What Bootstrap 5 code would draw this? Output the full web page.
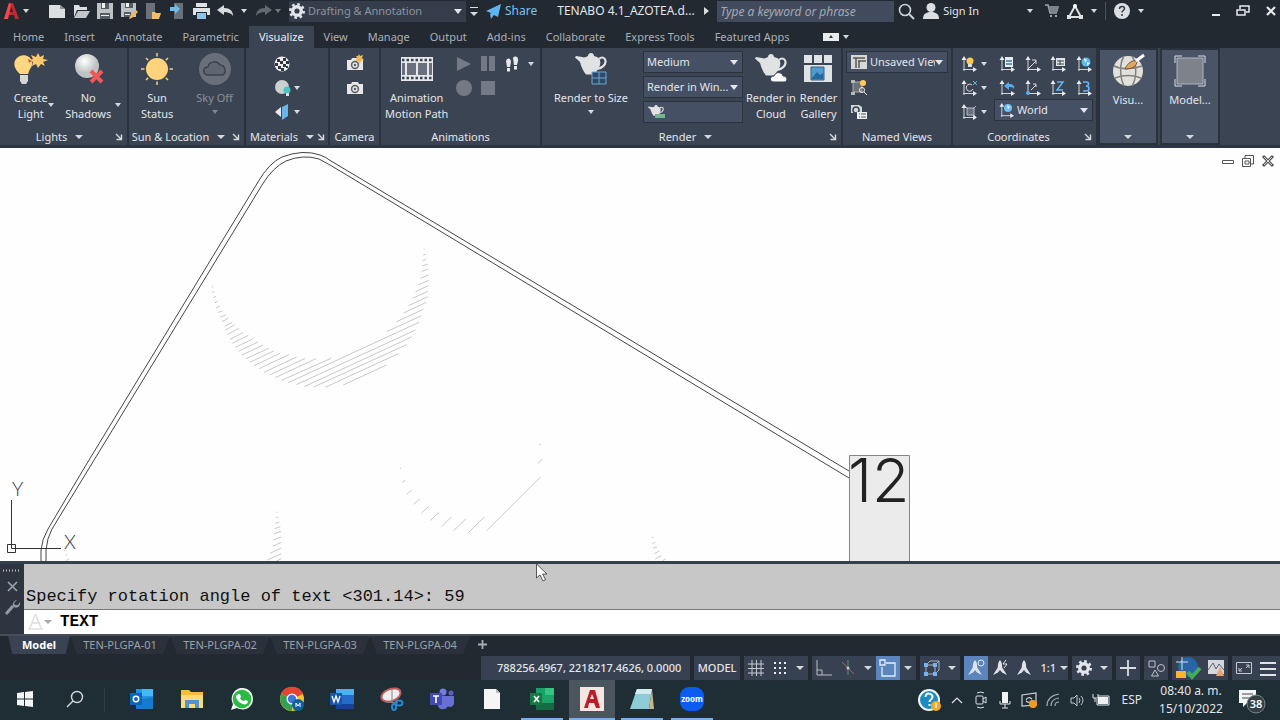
<!DOCTYPE html>
<html lang="en">
<head>
<meta charset="utf-8">
<meta name="viewport" content="width=device-width, initial-scale=1">
<title>TENABO 4.1_AZOTEA</title>
<link href="https://cdn.jsdelivr.net/npm/bootstrap@5.3.0/dist/css/bootstrap.min.css" rel="stylesheet">
<script src="https://cdn.jsdelivr.net/npm/bootstrap@5.3.0/dist/js/bootstrap.bundle.min.js" defer></script>
<style>
:root{--ink:#e3e6ea;--bar:#222931;--rib:#3b4453;--edge:#2a323e;--fld:#465064}
body{font-family:"Noto Sans","Open Sans",sans-serif;font-size:11px;line-height:16px;color:var(--ink);background:var(--bar)}
button{background:none;border:0;padding:0;color:inherit;font:inherit;display:inline-flex;align-items:center;justify-content:center;white-space:nowrap}
svg{display:block;flex:none;overflow:visible}
.shell{min-height:100vh}
.tri{display:block;flex:none;width:0;height:0;border:3px solid transparent;border-top:4px solid #d5d9de;border-bottom:0}
.tri-lg{border-width:4px 4px 0}
.tri-faint{border-top-color:#aaa}
.dim{opacity:.45}
/* title bar */
.titlebar{height:26px;padding-bottom:4px;background:var(--bar)}
.titlebar .tool{width:24px;height:20px}
.pick{appearance:none;border:0;border-radius:0;color:var(--ink);background:var(--fld) url("data:image/svg+xml,%3Csvg xmlns='http://www.w3.org/2000/svg' viewBox='0 0 8 5'%3E%3Cpath d='M0 0h8L4 5z' fill='%23e3e6ea'/%3E%3C/svg%3E") no-repeat right 4px center/8px 5px;padding:0 12px 0 3px;height:20px;font:inherit;outline:1px solid var(--edge)}
.slot .pick,.workspace .pick{outline:0}
.workspace{background:#353d4b;width:177px;height:21px;flex:none}
.workspace .pick{background-color:transparent;color:#8d949e}
.share{color:#7cc4f0;gap:4px;font-size:12px}
.doc-name{font-size:12px}
.find{width:177px;height:21px;background:#414b5d;border:0;color:#d0d4da;font:inherit;font-size:12px;padding:0 3px}
.find::placeholder{color:#a3a9b3;font-style:italic;opacity:1}
.split{border-left:1px solid #4a515b;height:18px}
/* ribbon */
.tabs{height:22px;padding-left:3px}
.tabs a{color:#aab0b8;text-decoration:none;padding:3px 10px;height:22px;white-space:nowrap}
.tabs a.active{background:var(--rib);color:#eef0f2}
.ribbon{background:var(--rib);height:100px;border-bottom:3px solid #2c3541}
.panel{border-right:2px solid var(--edge);flex:none}
.panel h2{font-size:11px;line-height:16px;font-weight:400;margin:0;height:16px}
.corner{width:16px;height:16px}
.big{flex-direction:column;justify-content:flex-start;line-height:16px}
.big svg{margin-bottom:4px}
.drop{align-self:flex-start;padding-top:55px}
.small-btn{width:24px;height:24px}
.slot{height:20px;background:var(--fld);outline:1px solid var(--edge)}
.w-lights{width:129px}.w-sun{width:117px}.w-mat{width:84px}.w-cam{width:51px}.w-anim{width:161px}.w-render{width:301px}.w-views{width:110px}.w-coord{width:145px}
.wide-tile{width:60px;background:#4a5467;border:2px solid var(--edge);height:97px}
.wide-tile + .wide-tile{margin-left:2px}
.picks{width:98px;gap:5px}
/* drawing area */
.stage{background:#fefefe;flex:1 0 413px;position:relative;overflow:hidden}
.stage-art{position:absolute;inset:0}
.wins{position:absolute;right:6px;top:7px;gap:8px}
/* command line */
.cmd{border-top:3px solid #34404b;background:#2e3541}
.cmd-side{width:24px}
.cmd-log{background:#c7c7c7;color:#111;height:46px;border-bottom:1px solid #777;font:17px/25px "Liberation Mono",monospace;white-space:pre;padding-left:2px}
.cmd-in{background:#fff;height:24px}
.cmd-in input{border:0;outline:0;font:bold 16px/24px "Liberation Mono",monospace;color:#000;padding:0}
.pointer{pointer-events:none}
/* sheets, status, taskbar */
.sheets{height:22px;border-top:2px solid #474e59;color:#9aa1ab}
.sheets a{color:inherit;text-decoration:none;text-align:center;width:100px;height:18px;line-height:17px;background:#2a313b;clip-path:polygon(0 0,100% 0,93% 100%,7% 100%)}
.sheets a.first{width:62px;background:#3a4353;color:#fff;font-weight:700}
.status{height:24px;gap:4px;font-weight:500}
.grp{background:#384152;height:24px}
.grp button{width:24px;height:24px}
.grp .nar{width:16px}
.grp .on{background:#5a86bd}
.coords{width:209px}
.task{height:40px;background:#1f2d34;font-size:12px}
.task .app{width:42px;height:40px;margin:0 4px;border-bottom:2px solid transparent}
.task .app.run{border-color:#76b0e4}
.task .app.cur{background:#4a555d;width:46px;margin:0 2px}
.tray button{width:24px;height:40px}
.clock{width:82px;line-height:18px;text-align:center}
</style>
</head>
<body>
<svg width="0" height="0" class="position-absolute" aria-hidden="true">
<defs>
<symbol id="ucs" viewBox="0 0 16 16"><path d="M3 15V3M2 13.500h12" stroke="#cfd4da" fill="none"/><path d="M3 0l2.500 4h-5zM16 13.500l-4-2.500v5z" fill="#e8ebee"/></symbol>
<symbol id="pot" viewBox="0 0 32 22"><path d="M13 3c0-4 6-4 6 0 6 1 7 5 6 9-1 4-4 7-6 9.500h-8C8 18 6 13 5 9L0 4.500 1 3l6 1c2 1 4 0 6-1z" fill="#e0e2e4"/><path d="M24 6c3-3 7-1 6.500 3S26 15 22 16" fill="none" stroke="#e0e2e4" stroke-width="2.200"/></symbol>
<symbol id="gear" viewBox="0 0 16 16"><circle cx="8" cy="8" r="4.300" fill="none" stroke="currentColor" stroke-width="3.400"/><circle cx="8" cy="8" r="6.700" fill="none" stroke="currentColor" stroke-width="2.600" stroke-dasharray="2.600 2.660"/></symbol>
<symbol id="launch" viewBox="0 0 8 8"><path d="M1 1l5 5M6.500 1.500v5h-5" fill="none" stroke="#d5d9de" stroke-width="1.400"/></symbol>
<symbol id="person" viewBox="0 0 16 16"><path d="M8 0c2 2 2.200 5 2.200 7.500L15 15l-5-2.500L8 10l-2 2.500L1 15l4.800-7.500C5.800 5 6 2 8 0z" fill="#dfe3e8"/></symbol>
<symbol id="cam" viewBox="0 0 16 14"><path d="M0 3h4l1-2h6l1 2h4v10H0z" fill="#e8e8e8"/><circle cx="8" cy="8" r="3.400" fill="none" stroke="#555d68" stroke-width="1.500"/><circle cx="8" cy="8" r="1.200" fill="#555d68"/></symbol>
</defs>
</svg>

<div class="shell d-flex flex-column">
<header class="titlebar d-flex align-items-center">
  <button aria-label="Application menu" class="ms-1 gap-1"><svg width="15" height="17" viewBox="0 0 15 17"><path d="M0 16L5 0h4l6 16h-4l-1-4H5l-1 4zM6 9h3L7.500 4z" fill="#c3272f"/><path d="M0 16L5 0l2 1-3 15z" fill="#ee4b50"/></svg><i class="tri"></i></button>
  <nav class="d-flex align-items-center ms-3" aria-label="Quick access">
    <button class="tool" aria-label="New"><svg width="16" height="13" viewBox="0 0 16 13"><path d="M0 0h11l5 4v9H0z" fill="#dcdfe1"/><path d="M11 0v4h5" fill="#8c9299"/></svg></button>
    <button class="tool" aria-label="Open"><svg width="17" height="14" viewBox="0 0 17 14"><path d="M1 13V1h5l1 2h7v3H4z" fill="#dcdfe1"/><path d="M5 7h12l-4 7H1z" fill="#c2c6ca"/></svg></button>
    <button class="tool" aria-label="Save"><svg width="16" height="16"><path d="M0 0h16v16H0z" fill="#bfc2c5"/><path d="M4 0h8v6H4zM3 10h10v6H3z" fill="#555b63"/><path d="M5 0h3v5H5zM4 12h8v1H4z" fill="#eee"/></svg></button>
    <button class="tool" aria-label="Save as"><svg width="16" height="16"><path d="M0 0h15v14H0z" fill="#bfc2c5"/><path d="M4 0h8v5H4zM3 9h7v5H3z" fill="#555b63"/><path d="M5 0h3v4H5zM4 11h5v1H4z" fill="#eee"/><path d="M15 7l2 2-6 6-3 1 1-3z" fill="#f0b75c"/></svg></button>
    <button class="tool" aria-label="Open from mobile"><svg width="16" height="16"><path d="M1 0h9v16H1z" fill="#6b7178"/><path d="M7 9h3l1 1h5l-2 6H7z" fill="#f0c067"/></svg></button>
    <button class="tool" aria-label="Save to mobile"><svg width="14" height="16"><path d="M4 0h9v16H4z" fill="#6b7178"/><path d="M0 4h5V1l5 5-5 5V8H0z" fill="#6dbcf0"/></svg></button>
    <button class="tool" aria-label="Plot"><svg width="17" height="16"><path d="M3 0h11v4H3zM0 5h17v7h-3V9H3v3H0z" fill="#dfe2e4"/><path d="M4 10h9v6H4z" fill="#8cc3ea"/></svg></button>
    <button class="tool" aria-label="Undo"><svg width="17" height="12"><path d="M0 5l7-5v3c6 0 9 3 9 8-2-3-5-4-9-4v3z" fill="#d8dcdf"/></svg></button>
    <button aria-label="Undo list" class="px-1"><i class="tri"></i></button>
    <button class="tool dim" aria-label="Redo"><svg width="17" height="12"><path d="M17 5l-7-5v3c-6 0-9 3-9 8 2-3 5-4 9-4v3z" fill="#b4b8bd"/></svg></button>
    <button aria-label="Redo list" class="dim"><i class="tri"></i></button>
  </nav>
  <div class="workspace d-flex align-items-center ms-2"><svg width="16" height="16"><use href="#gear"/></svg><select class="pick flex-grow-1" aria-label="Workspace"><option>Drafting &amp; Annotation</option></select></div>
  <button class="flex-column gap-1 ms-1" aria-label="Customize"><svg width="8" height="1"><path d="M0 0h8v1H0z" fill="#ddd"/></svg><i class="tri tri-lg"></i></button>
  <button class="share ms-2"><svg width="15" height="15"><path d="M0 7L15 0l-3 13-4-2-3 4-1-5 8-7-7 6z" fill="#5fb6ee"/></svg>Share</button>
  <span class="doc-name ms-3 ps-1 text-nowrap">TENABO 4.1_AZOTEA.d...</span>
  <button class="ms-auto me-2" aria-label="Show search"><svg width="5" height="8"><path d="M0 0l5 4-5 4z" fill="#ddd"/></svg></button>
  <input class="find" placeholder="Type a keyword or phrase" aria-label="Search">
  <button class="ms-1" aria-label="Search"><svg width="17" height="17" fill="none" stroke="#cdd1d5"><circle cx="7" cy="7" r="5.500" stroke-width="1.600"/><path d="M11 11l5 5" stroke-width="2"/></svg></button>
  <button class="ms-2 gap-1"><svg width="16" height="16"><circle cx="8" cy="4.500" r="4.500" fill="#dcdfe2"/><path d="M0 16c0-5 3-7 8-7s8 2 8 7z" fill="#dcdfe2"/></svg>Sign In</button>
  <button class="ms-5 me-2" aria-label="Account"><i class="tri"></i></button>
  <button class="ms-1" aria-label="App store"><svg width="14" height="14"><path d="M0 1h3l2 8h7M4 3h9l-1 4H5" fill="none" stroke="#9da2a9" stroke-width="1.500"/><path d="M4 3h9l-1 5H5z" fill="#7d838b"/><path d="M5 11h2v2H5zM10 11h2v2h-2z" fill="#9da2a9"/></svg></button>
  <button class="ms-2 gap-2" aria-label="Autodesk services"><svg width="16" height="15"><path d="M8 2L2 13h12z" fill="none" stroke="#dfe2e5" stroke-width="2"/><circle cx="8" cy="2" r="2" fill="#fff"/><path d="M0 11h4v4H0zM12 11h4v4h-4z" fill="#dfe2e5"/></svg><i class="tri"></i></button>
  <div class="split mx-2"></div>
  <button class="me-5 gap-2" aria-label="Help"><svg width="16" height="16"><circle cx="8" cy="8" r="8" fill="#dcdfe2"/><path d="M5.500 6c0-3.500 5-3 5-.500 0 2-2.500 2-2.500 4M8 11v2" stroke="#333a44" stroke-width="1.500" fill="none"/></svg><i class="tri"></i></button>
  <div class="d-flex align-items-center gap-3 ms-3 me-1 ps-1">
    <button aria-label="Minimize"><svg width="8" height="14"><path d="M0 10h8v2H0z" fill="#e8eaec"/></svg></button>
    <button aria-label="Restore"><svg width="14" height="12" fill="none" stroke="#e8eaec" stroke-width="1.500"><path d="M1 5h8v5H1zM4 4V1h9v6h-3"/></svg></button>
    <button aria-label="Close"><svg width="10" height="10"><path d="M1 1l8 8M9 1L1 9" stroke="#e8eaec" stroke-width="2.200"/></svg></button>
  </div>
</header>

<nav class="tabs d-flex" aria-label="Ribbon tabs">
  <a href="#">Home</a><a href="#">Insert</a><a href="#">Annotate</a><a href="#">Parametric</a><a href="#" class="active">Visualize</a><a href="#">View</a><a href="#">Manage</a><a href="#">Output</a><a href="#">Add-ins</a><a href="#">Collaborate</a><a href="#">Express Tools</a><a href="#">Featured Apps</a>
  <button class="ms-4 gap-1" aria-label="Minimize ribbon"><svg width="16" height="8"><path d="M0 0h16v8H0z" fill="#e8eaec"/><path d="M6 5l2-3 2 3z" fill="#333"/></svg><i class="tri"></i></button>
</nav>

<main class="ribbon d-flex">
  <section class="panel w-lights d-flex flex-column">
    <div class="d-flex flex-grow-1 justify-content-around ps-2">
      <div class="d-flex"><button class="big pt-1"><svg width="34" height="34"><path d="M6 22C0 17-1 11 2 7s9-5 13-2 4 9 1 12l-2 5z" fill="#ffd681"/><path d="M6 23h8v6l-2 3H8l-2-3z" fill="#d4d6d9"/><path d="M24 1l2 4 4-2-1 4 5 1-5 2 2 4-4-2-3 4-2-4-4 2 1-4-4-2 4-1-2-4 5 2z" fill="#ffca6e"/><path d="M14 7l4 2-3 2z" fill="#d35830"/></svg>Create<br>Light</button><button class="drop" aria-label="Light types"><i class="tri"></i></button></div>
      <div class="d-flex"><button class="big pt-1"><svg width="34" height="34"><defs><radialGradient id="ball" cx=".4" cy=".3"><stop stop-color="#fff"/><stop offset="1" stop-color="#bfc2c3"/></radialGradient></defs><circle cx="16" cy="14" r="12" fill="url(#ball)"/><path d="M20 19l11 11M31 19L20 30" stroke="#ef5a58" stroke-width="4"/></svg>No<br>Shadows</button><button class="drop" aria-label="Shadow types"><i class="tri ms-1"></i></button></div>
    </div>
    <h2 class="d-flex align-items-center"><span class="flex-grow-1 d-flex justify-content-center align-items-center gap-2 ps-2">Lights <i class="tri tri-lg"></i></span><button class="corner" aria-label="Lights settings"><svg width="8" height="8"><use href="#launch"/></svg></button></h2>
  </section>
  <section class="panel w-sun d-flex flex-column">
    <div class="d-flex flex-grow-1 justify-content-around">
      <button class="big pt-1"><svg width="34" height="34"><g stroke="#f0cf85" stroke-width="1.500"><path d="M17 1v32M1 17h32M6 6l22 22M28 6L6 28"/></g><circle cx="17" cy="17" r="12.500" fill="#3b4453"/><circle cx="17" cy="17" r="11" fill="#ffd37c"/></svg>Sun<br>Status</button>
      <button class="big pt-1 dim"><svg width="34" height="34"><circle cx="17" cy="17" r="16" fill="#a2a6ad"/><path d="M9 23c-5-2-4-8 1-8 1-6 9-7 12-2 5 0 7 7 3 10z" fill="#8c9098" stroke="#39414d" stroke-width="1.500"/></svg>Sky Off<i class="tri mt-1"></i></button>
    </div>
    <h2 class="d-flex align-items-center"><span class="flex-grow-1 d-flex justify-content-center align-items-center gap-2 text-nowrap">Sun &amp; Location <i class="tri tri-lg"></i></span><button class="corner" aria-label="Sun settings"><svg width="8" height="8"><use href="#launch"/></svg></button></h2>
  </section>
  <section class="panel w-mat d-flex flex-column">
    <div class="flex-grow-1 d-flex flex-column align-items-start ps-4 pt-1">
      <button class="small-btn" aria-label="Materials browser"><svg width="16" height="16"><circle cx="8" cy="8" r="7.500" fill="#eee"/><path d="M3 3h3v3H3zM9 2h3v3H9zM6 5h3v3H6zM12 5h3v3h-3zM1 7h3v3H1zM9 8h3v3H9zM4 10h3v3H4zM7 12h3v3H7zM12 10h2v2h-2z" fill="#303741"/></svg></button>
      <div class="d-flex"><button class="small-btn" aria-label="Materials on"><svg width="17" height="16"><circle cx="8" cy="7" r="7" fill="#cbd0d0"/><circle cx="13" cy="10" r="3.500" fill="#4bc4c4"/><path d="M12 13h3v3h-3z" fill="#dde"/></svg></button><button aria-label="Material options"><i class="tri"></i></button></div>
      <div class="d-flex"><button class="small-btn" aria-label="Material mapping"><svg width="14" height="16"><path d="M0 8l6-5v10z" fill="#e8eaec"/><path d="M7 3l6-3v12l-6 4z" fill="#69b6ec"/></svg></button><button aria-label="Mapping options"><i class="tri"></i></button></div>
    </div>
    <h2 class="d-flex align-items-center"><span class="flex-grow-1 d-flex justify-content-center align-items-center gap-2 ps-1">Materials <i class="tri tri-lg"></i></span><button class="corner" aria-label="Materials settings"><svg width="8" height="8"><use href="#launch"/></svg></button></h2>
  </section>
  <section class="panel w-cam d-flex flex-column align-items-center">
    <div class="flex-grow-1 d-flex flex-column pt-1">
      <button class="small-btn" aria-label="Create camera"><svg width="16" height="14"><use href="#cam"/><path d="M12-3l1 2 3-1-1 3 2 2-3 1-1 3-2-3-3 0 2-3-1-2 2 0z" fill="#eeb95b"/></svg></button>
      <button class="small-btn" aria-label="Show cameras"><svg width="16" height="14"><use href="#cam"/></svg></button>
    </div>
    <h2>Camera</h2>
  </section>
  <section class="panel w-anim d-flex flex-column">
    <div class="flex-grow-1 d-flex ps-1">
      <button class="big pt-1 me-1"><svg width="34" height="34"><path d="M1 5h32v24H1z" fill="#e6e8ea"/><path d="M2 11h3v12H2zM7 11h9v12H7zM18 11h9v12h-9zM29 11h3v12h-3z" fill="#6a717c"/><path d="M2 8h30M2 26h30" stroke="#3b4453" stroke-width="2.500" stroke-dasharray="2.500 2"/></svg>Animation<br>Motion Path</button>
      <div class="d-flex flex-wrap align-content-start pt-1">
        <button class="small-btn" aria-label="Play"><svg width="16" height="16"><path d="M1 1l14 7-14 7z" fill="#747a85"/></svg></button><button class="small-btn" aria-label="Pause"><svg width="16" height="16"><path d="M1 0h6v15H1zM9 0h6v15H9z" fill="#747a85"/></svg></button><button class="small-btn" aria-label="Walk"><svg width="14" height="16"><path d="M1 5c1-4 5-3 5 1l-1 5H2zM2 12h3v3.500H2zM8 2c2-3 6-1 5 3l-1 4H9zM9 10h3v3.500H9z" fill="#e6e8ea"/></svg></button><button aria-label="Walk options"><i class="tri ms-1"></i></button>
        <button class="small-btn" aria-label="Record"><svg width="16" height="16"><circle cx="8" cy="8" r="8" fill="#747a85"/></svg></button><button class="small-btn" aria-label="Stop"><svg width="16" height="16"><path d="M1 1h14v14H1z" fill="#747a85"/></svg></button>
      </div>
    </div>
    <h2 class="text-center">Animations</h2>
  </section>
  <section class="panel w-render d-flex flex-column">
    <div class="flex-grow-1 d-flex">
      <button class="big pt-1 ms-1 px-2"><svg width="34" height="34"><use href="#pot" x="1" y="1" width="32" height="22"/><path d="M18 20h14v12H18z" fill="#2e4a66" stroke="#6ca6d4"/><path d="M25 20v12M18 26h14" stroke="#6ca6d4"/></svg>Render to Size<i class="tri mt-1"></i></button>
      <div class="picks d-flex flex-column pt-1 ms-2">
        <select class="pick" aria-label="Render preset"><option>Medium</option></select>
        <select class="pick" aria-label="Render target"><option>Render in Win...</option></select>
        <div class="slot d-flex align-items-center ps-1"><svg width="17" height="14"><use href="#pot" width="16" height="11"/><path d="M7 9h10v4H7z" fill="#76b593"/></svg></div>
      </div>
      <button class="big pt-1 ms-1"><svg width="34" height="34"><use href="#pot" x="1" y="2" width="32" height="22"/><path d="M20 30c-5 0-5-6 0-6 2-5 8-4 9 0 5 0 5 6 1 6z" fill="#fafafa" stroke="#3b4453"/></svg>Render in<br>Cloud</button>
      <button class="big pt-1 ms-1"><svg width="34" height="34"><path d="M3 3h8v8H3zM13 3h8v8h-8zM23 3h8v8h-8zM3 13h28v17H3z" fill="#e0e3e5"/><path d="M10 15h13v13H10z" fill="#4e9bd0" stroke="#365f80"/><path d="M11 26l5-6 3 3 3-2v6H11z" fill="#2469a0"/></svg>Render<br>Gallery</button>
    </div>
    <h2 class="d-flex align-items-center"><span class="flex-grow-1 d-flex justify-content-center align-items-center gap-2 ps-1">Render <i class="tri tri-lg"></i></span><button class="corner" aria-label="Render settings"><svg width="8" height="8"><use href="#launch"/></svg></button></h2>
  </section>
  <section class="panel w-views d-flex flex-column">
    <div class="flex-grow-1 d-flex flex-column align-items-start px-1 pt-1">
      <div class="slot d-flex align-items-center w-100 mb-1"><svg class="ms-1" width="16" height="14"><path d="M0 0h16v14H0z" fill="#d8d9d7"/><path d="M2 3h12M5 3v10M7 6h8M8 6v7" stroke="#555" stroke-width="1.500"/></svg><select class="pick flex-grow-1 w-50" aria-label="Named view"><option>Unsaved View</option></select></div>
      <button class="small-btn" aria-label="New view"><svg width="16" height="16"><path d="M2 2h9v10H2z" fill="#6a717b" stroke="#aaa"/><path d="M0 0h4v3H0zM0 12h4v3H0z" fill="#b5b8bc"/><circle cx="12" cy="3" r="3" fill="#ffcd56"/><circle cx="11" cy="10" r="2.500" fill="none" stroke="#eee"/><path d="M13 12l3 3" stroke="#eee"/></svg></button>
      <button class="small-btn" aria-label="View manager"><svg width="16" height="16"><path d="M0 1h8l3 2v6H0z" fill="#d5d8da"/><circle cx="5" cy="6" r="3" fill="none" stroke="#3b4453" stroke-width="1.500"/><path d="M6 8h10v7H6z" fill="#f0f0f0"/><path d="M8 10h1M10 10h5M8 13h1M10 13h5" stroke="#456"/></svg></button>
    </div>
    <h2 class="text-center">Named Views</h2>
  </section>
  <section class="panel w-coord d-flex flex-column">
    <div class="flex-grow-1 d-flex pt-1 ps-1">
      <div class="d-flex flex-column">
        <div class="d-flex"><button class="small-btn" aria-label="UCS icon"><svg width="16" height="16"><use href="#ucs"/><circle cx="9" cy="5" r="3.500" fill="#ffc951"/><path d="M7 8h4v3H7z" fill="#ddd"/></svg></button><button aria-label="UCS icon options"><i class="tri"></i></button></div>
        <div class="d-flex"><button class="small-btn" aria-label="Rotate X"><svg width="16" height="16"><use href="#ucs"/><path d="M11 5a3.500 3.500 0 1 0 1 4" fill="none" stroke="#ddd"/><path d="M12 1l4 4M16 1l-4 4" stroke="#5bb8c8"/></svg></button><button aria-label="Rotate options"><i class="tri"></i></button></div>
        <div class="d-flex"><button class="small-btn" aria-label="UCS view"><svg width="16" height="16"><use href="#ucs"/><path d="M6 4h7v7H6zM4 2l3 3M15 2l-3 3M15 13l-3-3" fill="#687180" stroke="#bbc"/></svg></button><button aria-label="View options"><i class="tri"></i></button></div>
      </div>
      <div class="flex-grow-1 ps-2">
        <div class="d-flex justify-content-between"><button class="small-btn" aria-label="UCS"><svg width="16" height="16"><use href="#ucs"/><path d="M6 1h8v10H6z" fill="#e9ecef"/><path d="M7 5h6M7 8h6" stroke="#347bb0" stroke-width="1.500"/></svg></button><button class="small-btn" aria-label="Z axis vector"><svg width="16" height="16"><use href="#ucs"/><path d="M3 13l8-8M7 4h4v4" stroke="#ddd" fill="none"/></svg></button><button class="small-btn" aria-label="UCS named"><svg width="16" height="16"><use href="#ucs"/><path d="M6 2h9v8H6z" fill="#e2e5e8"/><path d="M7 5h7M7 8h7M10 4v5" stroke="#444"/></svg></button><button class="small-btn" aria-label="UCS world"><svg width="16" height="16"><use href="#ucs"/><circle cx="10" cy="6" r="4.500" fill="#58b7ef"/><path d="M8 2l3 2-2 3zM11 6l3 1-3 3z" fill="#e9f5fc"/></svg></button></div>
        <div class="d-flex justify-content-between"><button class="small-btn" aria-label="UCS previous"><svg width="16" height="16"><use href="#ucs"/><path d="M5 6l5-4v2c4 0 6 2 5 5-1-2-3-2-5-2v3z" fill="#58aaf0"/></svg></button><button class="small-btn" aria-label="Origin"><svg width="16" height="16"><use href="#ucs"/><path d="M6 10l5-5M8 4h3v3" stroke="#ddd" fill="none"/><circle cx="3" cy="13" r="2" fill="#58aaf0"/></svg></button><button class="small-btn" aria-label="Z axis rotate"><svg width="16" height="16"><use href="#ucs"/><path d="M7 2h6l-6 8h6" stroke="#65b4f2" stroke-width="1.500" fill="none"/></svg></button><button class="small-btn" aria-label="3 point"><svg width="16" height="16"><use href="#ucs"/><path d="M7 2h3c4 0 3 4 0 4 4 0 4 5 0 5H7" stroke="#65b4f2" stroke-width="1.600" fill="none"/></svg></button></div>
        <div class="slot d-flex align-items-center me-1"><svg class="ms-1" width="15" height="15"><use href="#ucs"/><circle cx="9" cy="5" r="4" fill="#6dc1f2"/><path d="M8 2l3 2-2 2z" fill="#e9f5fc"/></svg><select class="pick flex-grow-1 w-50" aria-label="Coordinate system"><option>World</option></select></div>
      </div>
    </div>
    <h2 class="d-flex align-items-center"><span class="flex-grow-1 text-center ps-1">Coordinates</span><button class="corner" aria-label="Coordinates settings"><svg width="8" height="8"><use href="#launch"/></svg></button></h2>
  </section>
  <button class="big wide-tile"><svg width="34" height="34" class="mt-1"><circle cx="17" cy="17" r="15" fill="#e2e1dc"/><path d="M3 12c8 4 20 3 28 0M4 24c8-3 18-3 26 0M13 2c-5 8-4 22 0 30M21 2c5 8 5 22 0 30" fill="none" stroke="#82817c" stroke-width="1.500"/><path d="M14 15c3-7 8-9 12-8 0 5-4 8-12 8z" fill="#dca663" stroke="#75552f"/><path d="M25 7l8-6" stroke="#fff" stroke-width="3"/></svg>Visu...<i class="tri tri-lg mt-auto mb-1"></i></button>
  <button class="big wide-tile"><svg width="34" height="34" class="mt-1"><path d="M4 4h26v26H4z" fill="#7d828b" stroke="#adb7c3"/><path d="M2 9V2h7M25 2h7v7M32 25v7h-7M9 32H2v-7" fill="none" stroke="#d9e0e7"/></svg>Model...<i class="tri tri-lg mt-auto mb-1"></i></button>
</main>

<section class="stage" aria-label="Drawing">
  <svg class="stage-art w-100 h-100" viewBox="0 148 1280 413" preserveAspectRatio="xMinYMin slice" fill="none">
    <g stroke="#454545">
      <path d="M41 562V550Q42 539 48 529L83 470 258 182Q269 163 282 157 303 149 320 155 326 157 331 161L440 226 849 471"/>
      <path d="M46 562V550Q47 538 52 529L88 470 262 185Q273 167 286 161 303 154 319 159L330 165 440 231 849 478"/>
    </g>
    <path d="M849.500 562V455.500h60V562" fill="#ebebeb" stroke="#858585"/>
    <text x="848" y="502" font-family="Inter" font-weight="300" font-size="61" fill="#222">12</text>
    <g stroke="#c8c8c8" stroke-width="3">
      <path transform="translate(200 150) scale(.3333)" d="M35 412l5-3M37 428l6-3M40 443l8-4M44 459l9-5M48 474l12-6M54 488l13-6M60 502l18-8M66 515l20-11M74 529l23-12M76 541l28-17M82 554l34-19M90 568l40-21M97 580l48-24M106 592l54-26M116 604l58-28M126 615l64-30M138 626l68-31M150 637l71-34M162 647l78-37M177 656l90-42M192 667l98-46M209 675l107-50M226 683l122-57M245 691l148-66M265 698L657 517M289 704L647 540M313 710L635 561M341 711L620 584M376 712L595 611M430 705L560 645M560 545l105-48M590 515l80-37M611 489l68-32M626 467l58-27M638 445l46-21M647 425l38-18M655 405l31-14M661 385l25-10M665 365l19-8M666 348l17-5M668 332l11-4M670 315l7-2M671 298l3-1"/>
      <path transform="translate(380 430) scale(.3333)" d="M60 116l3-1M67 157l9-6M80 193l16-13M101 223l19-17M125 249l21-20M150 272l28-25M186 289l28-28M221 302l37-36M265 308l49-48M320 302L482 141M474 100l14-13M477 44l5-1M816 324l5-3M817 341l9-4M819 355l13-5M823 371l15-8M826 387l19-10M848 392l9-5"/>
      <path transform="translate(0 470) scale(.3333)" d="M829 127l3-1M829 143l6-2M827 160l11-4M824 176l17-6M822 192l21-8M820 210l23-9M818 229l26-12M810 250l34-16M802 270l42-19M830 273l14-7M192 242l4-2M197 256l5-3M199 271l8-4"/>
    </g>
    <g stroke="#333"><path d="M7.500 544.500h8v8h-8zM11.500 500v48.500H61"/></g>
    <g font-family="Lato" font-weight="300" font-size="19" fill="#333"><text x="12" y="496">Y</text><text x="64" y="549">X</text></g>
  </svg>
  <div class="wins d-flex align-items-center">
    <button aria-label="Minimize drawing"><svg width="12" height="12"><path d="M.5 5.500h11v3H.5z" fill="none" stroke="#555"/></svg></button>
    <button aria-label="Restore drawing"><svg width="12" height="12" fill="none" stroke="#555"><path d="M.5 3.500h8v8h-8zM3 3V.5h8.500V9H9M3 6h4v3H3z"/></svg></button>
    <button aria-label="Close drawing"><svg width="12" height="12"><path d="M1 1l10 10M11 1L1 11" stroke="#555" stroke-width="3"/><path d="M2 2l8 8M10 2l-8 8" stroke="#ddd"/></svg></button>
  </div>
</section>

<section class="cmd d-flex position-relative" aria-label="Command line">
  <div class="cmd-side d-flex flex-column align-items-center">
    <svg width="18" height="14"><path d="M0 6.500h18" stroke="#b9bec6" stroke-width="2" stroke-dasharray="1 2"/></svg>
    <button class="my-1" aria-label="Close command line"><svg width="9" height="9"><path d="M0 0l9 9M9 0L0 9" stroke="#9ca2ab" stroke-width="1.700"/></svg></button>
    <button class="mt-1" aria-label="Customize"><svg width="15" height="16"><path d="M1 15l7-8" stroke="#959ba5" stroke-width="3"/><path d="M12 1L9 4l1 2h3l2-3c1 4-3 7-6 5-3-2 0-7 3-7z" fill="#959ba5"/></svg></button>
  </div>
  <div class="flex-grow-1">
    <div class="cmd-log d-flex align-items-end">Specify rotation angle of text &lt;301.14&gt;: 59</div>
    <div class="cmd-in d-flex align-items-center"><svg class="ms-1" width="16" height="16"><path d="M2 14L7 1h1l5 13M4 9h7M0 15h15" fill="none" stroke="#dedede" stroke-width="1.500"/></svg><i class="tri tri-lg tri-faint me-1"></i><input class="flex-grow-1 ps-1" value="TEXT" aria-label="Command"></div>
  </div>
  <svg class="pointer position-absolute start-0 top-0" width="560" height="20"><path d="M536.500 0v14l3.500-3 3 6 2.500-1.200-2.800-5.800h4.300z" fill="#fff" stroke="#333" stroke-width=".8"/></svg>
</section>

<nav class="sheets d-flex" aria-label="Layouts">
  <a href="#" class="first ms-2">Model</a><a href="#">TEN-PLGPA-01</a><a href="#">TEN-PLGPA-02</a><a href="#">TEN-PLGPA-03</a><a href="#">TEN-PLGPA-04</a>
  <button class="px-2 pb-1" aria-label="New layout"><svg width="9" height="9"><path d="M4.500 0v9M0 4.500h9" stroke="#a7adb5" stroke-width="1.800"/></svg></button>
</nav>

<footer class="status d-flex justify-content-end">
  <div class="grp coords d-flex align-items-center justify-content-center ps-2 text-nowrap">788256.4967, 2218217.4626, 0.0000</div>
  <div class="grp px-1 d-flex align-items-center">MODEL</div>
  <div class="grp d-flex"><button aria-label="Grid"><svg width="16" height="16"><path d="M4 0v16M8.500 0v16M13 0v16M0 4h16M0 8.500h16M0 13h16" stroke="#c5c9cf"/></svg></button><button aria-label="Snap"><svg width="14" height="14"><path d="M1 2h13M1 7h13M1 12h13" stroke="#eceef0" stroke-width="2" stroke-dasharray="2 3"/></svg></button><button class="nar" aria-label="Snap options"><i class="tri tri-lg"></i></button></div>
  <div class="grp d-flex"><button aria-label="Ortho"><svg width="16" height="16"><path d="M1 0v15h15M1 10h5v5" fill="none" stroke="#b9bec5"/></svg></button><button aria-label="Polar"><svg width="16" height="16"><path d="M8 0v15" stroke="#5c916b"/><path d="M2 2l12 12" stroke="#9a6a70"/><circle cx="8" cy="8" r="1.500" fill="#ccc"/></svg></button><button class="nar" aria-label="Polar options"><i class="tri tri-lg"></i></button><button class="on" aria-label="Object snap"><svg width="18" height="18"><path d="M7 4h9v13H3V8M1 1h5v5H1z" fill="none" stroke="#e3eefa" stroke-width="1.300"/></svg></button><button class="nar" aria-label="Object snap options"><i class="tri tri-lg"></i></button></div>
  <div class="grp d-flex"><button aria-label="3D object snap"><svg width="16" height="16"><path d="M2 5h9v9H2zM2 5l4-4h9v9l-4 4M11 5l4-4" fill="none" stroke="#aab0ba"/><path d="M0 3h4v4H0zM9 3h4v4H9zM0 12h4v4H0zM9 12h4v4H9z" fill="#79b2f0"/></svg></button><button class="nar" aria-label="3D snap options"><i class="tri tri-lg"></i></button></div>
  <div class="grp d-flex"><button class="on" aria-label="Annotation visibility"><svg width="18" height="16"><use href="#person" width="16" height="16"/><circle cx="14" cy="3" r="3" fill="none" stroke="#d8e8f8"/></svg></button><button aria-label="Auto scale"><svg width="16" height="16"><use href="#person"/><path d="M14 0l-3 4h4l-3 4" fill="none" stroke="#dfe3e8"/></svg></button><button aria-label="Annotation scale"><svg width="16" height="16"><use href="#person"/></svg></button><button class="w-auto ps-1 gap-1">1:1<i class="tri tri-lg"></i></button></div>
  <div class="grp d-flex"><button aria-label="Workspace switching"><svg width="16" height="16"><use href="#gear"/></svg></button><button class="nar" aria-label="Workspace list"><i class="tri tri-lg"></i></button></div>
  <div class="grp d-flex"><button aria-label="Annotation monitor"><svg width="16" height="16"><path d="M8 0v16M0 8h16" stroke="#d9dde2" stroke-width="1.800"/></svg></button></div>
  <div class="grp d-flex"><button aria-label="Isolate objects"><svg width="17" height="16" fill="none" stroke="#bfc4cb"><path d="M1 1h6v6H1zM7 10l3.500 6h-7z"/><circle cx="13" cy="8" r="3.500"/></svg></button></div>
  <div class="grp d-flex"><button class="me-1 ms-1" aria-label="Hardware acceleration"><svg width="24" height="24"><circle cx="12" cy="11" r="10" fill="#2965a6"/><path d="M6 1v13M0 6h12" stroke="#d7e3ef"/><path d="M0 15h10v7H0z" fill="#f8b52c"/><path d="M12 16l4 5 8-9" fill="none" stroke="#43ac57" stroke-width="4"/></svg></button><button aria-label="Clean screen preview"><svg width="17" height="17"><path d="M0 0h16v14H0z" fill="#d5d8db"/><path d="M0 10l5-7 3 6 3-5 5 6" fill="none" stroke="#59616c"/><path d="M12 7l4 9H8z" fill="#eda070"/></svg></button></div>
  <div class="grp d-flex"><button aria-label="Full screen"><svg width="16" height="12" fill="none" stroke="#c3c8ce"><path d="M.5.5h15v11H.5zM3 9l3-3M3 6v3h3M13 3l-3 3M10 3h3v3"/></svg></button><button aria-label="Customization"><svg width="16" height="15"><path d="M0 2h16M0 8h16M0 14h16" stroke="#e0e3e7" stroke-width="2"/></svg></button></div>
</footer>

<footer class="task d-flex align-items-center">
  <button class="app ms-1" aria-label="Start"><svg width="16" height="16"><path d="M0 2l7-1v6.500H0zM8 1l8-1v7.500H8zM0 8.500h7V15l-7-1zM8 8.500h8V16l-8-1z" fill="#f3f5f6"/></svg></button>
  <button class="app" aria-label="Search"><svg width="18" height="18" fill="none" stroke="#d3d8da" stroke-width="1.400"><circle cx="11" cy="7" r="5.500"/><path d="M7 11l-6 6"/></svg></button>
  <div class="vr ms-1 me-2 pe-1 my-2 bg-transparent border-start border-secondary"></div>
  <button class="app" aria-label="Outlook"><svg width="24" height="22"><path d="M6 1h17v20H6z" fill="#2193df"/><path d="M12 1h11v7H12z" fill="#46b8f4"/><path d="M6 12l17-3v12H6z" fill="#157bd0"/><path d="M0 5h12v12H0z" fill="#0c63b8"/><circle cx="6" cy="11" r="2.700" fill="none" stroke="#fff" stroke-width="1.500"/></svg></button>
  <button class="app" aria-label="Explorer"><svg width="22" height="20"><path d="M0 1h8l2 2h12v16H0z" fill="#f5bc3d"/><path d="M0 6h22v13H0z" fill="#ffdb78"/><path d="M4 19v-8h14v8h-4v-4H8v4z" fill="#4b96cc"/></svg></button>
  <button class="app" aria-label="WhatsApp"><svg width="22" height="22"><path d="M0 22l2-6C-2 8 4 0 11 0c8 0 11 6 11 11 0 8-8 13-16 9z" fill="#effaf0"/><circle cx="11" cy="11" r="9.300" fill="#2db945"/><path d="M7 6l2 0 1 3-1 1c1 2 2 3 4 3l1-1 3 1c0 3-3 4-5 3-4-1-7-5-7-8z" fill="#fff"/></svg></button>
  <button class="app" aria-label="Chrome"><svg width="24" height="24"><circle cx="12" cy="12" r="12" fill="#f8c332"/><path d="M12 12L1 7a12 12 0 0 1 22 0z" fill="#e34436"/><path d="M12 12L1 7c-3 8 2 16 11 17z" fill="#31a350"/><circle cx="12" cy="12" r="5.500" fill="#fff"/><circle cx="12" cy="12" r="4.200" fill="#3c78db"/><circle cx="18" cy="18" r="6" fill="#0e6099"/><path d="M16 20v-4l2 3 2-3v4" stroke="#fff" fill="none"/></svg></button>
  <button class="app" aria-label="Word"><svg width="24" height="22"><path d="M6 1h18v20H6z" fill="#246bc9"/><path d="M6 1h18v6H6z" fill="#4db1ed"/><path d="M6 16h18v5H6z" fill="#174391"/><path d="M0 5h12v12H0z" fill="#1856ad"/><path d="M2 8l2 6 2-6 2 6 2-6" fill="none" stroke="#fff" stroke-width="1.300"/></svg></button>
  <button class="app" aria-label="Snipping tool"><svg width="24" height="24"><ellipse cx="11" cy="8" rx="10" ry="6" transform="rotate(-20 11 8)" fill="#eee" stroke="#bd5c5c" stroke-width="2"/><path d="M12 2v14M6 15l12 1" stroke="#888"/><ellipse cx="19" cy="16" rx="3.500" ry="2.500" fill="none" stroke="#278ad0" stroke-width="2"/><ellipse cx="14" cy="20" rx="2" ry="3" fill="none" stroke="#278ad0" stroke-width="2"/></svg></button>
  <button class="app" aria-label="Teams"><svg width="24" height="22"><circle cx="13" cy="4" r="3.500" fill="#747ce2"/><circle cx="21" cy="5" r="2.500" fill="#5b60c6"/><path d="M8 8h16v7c0 4-5 5-6 3-2 5-10 4-10-1z" fill="#6870d6"/><path d="M0 5h12v12H0z" fill="#434baf"/><path d="M3 8h6M6 8v7" stroke="#fff" stroke-width="1.600"/></svg></button>
  <button class="app" aria-label="Document"><svg width="16" height="20"><path d="M0 0h12l4 4v16H0z" fill="#f5f5f5"/><path d="M12 0v4h4" fill="#bbb"/></svg></button>
  <button class="app run" aria-label="Excel"><svg width="24" height="22"><path d="M6 0h18v22H6z" fill="#1ba268"/><path d="M15 0h9v7h-9z" fill="#36c481"/><path d="M6 15h18v7H6z" fill="#146c42"/><path d="M0 5h12v12H0z" fill="#127b42"/><path d="M4 8l5 6M9 8l-5 6" stroke="#fff" stroke-width="1.600"/></svg></button>
  <button class="app run cur" aria-label="AutoCAD"><svg width="24" height="24"><path d="M0 0h24v24H0z" fill="#f6e6e2"/><path d="M4 21L10 3h5l5 18h-4l-2-5H9l-1 5zM10 12h4l-2-5z" fill="#b71e29"/></svg></button>
  <button class="app run" aria-label="Notepad"><svg width="24" height="22"><path d="M7 1h15l-3 20H0z" fill="#8cccd7"/><path d="M7 1h15l-1 5H5z" fill="#d5ecee"/><path d="M22 1l2 20h-5z" fill="#c7b589"/></svg></button>
  <button class="app run" aria-label="Zoom"><svg width="24" height="24"><rect width="24" height="24" rx="9" fill="#0b5cf0"/><text x="12" y="15" text-anchor="middle" font-size="8" font-weight="700" fill="#fff">zoom</text></svg></button>
  <div class="tray d-flex align-items-center ms-auto">
    <button class="me-1" aria-label="Get help"><svg width="23" height="22"><circle cx="11" cy="11" r="10" fill="#1a8cc0" stroke="#f2f6f8" stroke-width="2"/><path d="M7.500 8c0-5 7-4 7 0 0 3-3 2-3 5M11.500 15v2" stroke="#fff" stroke-width="2" fill="none"/><circle cx="18" cy="17" r="5" fill="#f2a82c"/><path d="M18 14v5" stroke="#fff" stroke-width="1.500"/></svg></button>
    <button aria-label="Hidden icons"><svg width="12" height="7"><path d="M1 6l5-5 5 5" fill="none" stroke="#dfe4e6" stroke-width="1.200"/></svg></button>
    <button aria-label="Meet now"><svg width="12" height="16" fill="none" stroke="#dfe4e6"><rect x="1" y="4" width="7" height="8" rx="1"/><path d="M8 7l3-2v6l-3-2M2 1q4-2 7 0M2 15q4 2 7 0"/></svg></button>
    <button aria-label="Microphone"><svg width="12" height="17"><path d="M3 0h6v11H3z" fill="#f0f2f3"/><path d="M1 9v3h10V9M6 12v4M3 16h6" fill="none" stroke="#dfe4e6"/></svg></button>
    <button aria-label="Sync"><svg width="17" height="17"><path d="M1 3l14-2v12L1 14zM5 8q2-4 6-1M11 8q-3 4-6 1" fill="none" stroke="#cdd3d6" stroke-width="1.200"/><circle cx="12" cy="12" r="4" fill="#f59c20"/></svg></button>
    <button aria-label="Wi-Fi"><svg width="14" height="14" fill="none" stroke="#a6afb4" stroke-width="1.200"><path d="M1 13Q1 3 13 1M5 13Q5 6 13 5M9 13Q9 9 13 9"/></svg></button>
    <button aria-label="Volume"><svg width="15" height="13" fill="none" stroke="#c4cbcf"><path d="M1 4h3l3-3v11L4 9H1zM9 4q2 2 0 5M11 2q4 4 0 9"/></svg></button>
    <button aria-label="Battery"><svg width="17" height="12"><path d="M5 3h10v7H5z" fill="#eef0f1"/><path d="M4 5v6h12V2H5M0 0v4h5V0M2 4v4" fill="none" stroke="#dfe4e6"/></svg></button>
    <button class="w-auto px-2">ESP</button>
    <time class="clock">08:40 a. m.<br>15/10/2022</time>
    <button class="ms-2 me-3" aria-label="Notifications"><svg width="26" height="24"><path d="M0 2h17v13H8l-4 4v-4H0z" fill="#f5f6f7"/><path d="M3 6h11M3 10h11" stroke="#3b474e"/><circle cx="17" cy="16" r="9" fill="#343e43" stroke="#7b8489"/><text x="17" y="20" text-anchor="middle" font-size="11" font-weight="600" fill="#fff">38</text></svg></button>
  </div>
</footer>
</div>
</body>
</html>
